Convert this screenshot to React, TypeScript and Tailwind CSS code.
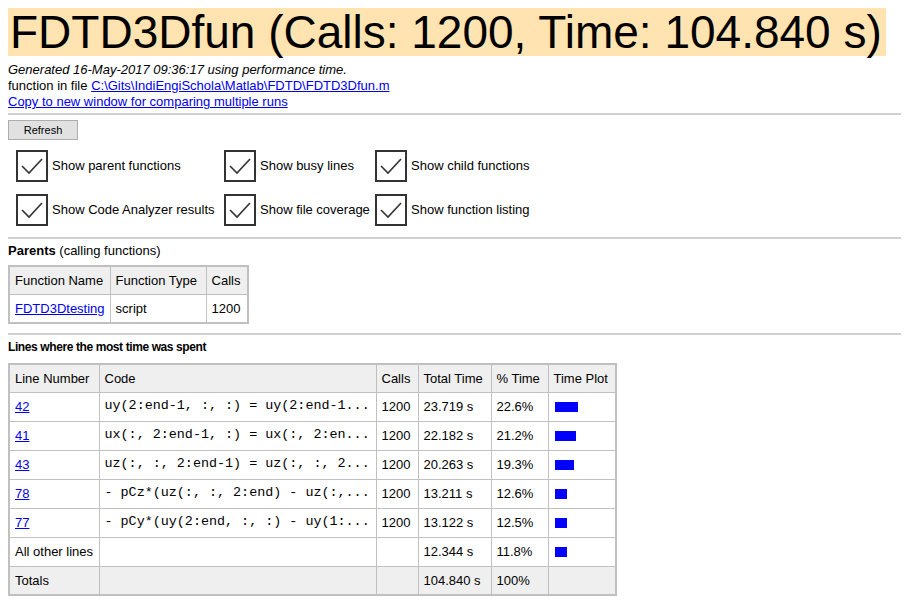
import React from "react";

const Check = () => (
  <div className="w-8 h-8 border-2 border-[#333] flex items-center justify-center shrink-0">
    <svg width="24" height="24" viewBox="0 0 24 24" fill="none">
      <path d="M2 12 L9 19 L22 5" stroke="#333" strokeWidth="1.6" />
    </svg>
  </div>
);

const Opt = ({ label, w }: { label: string; w: string }) => (
  <div className={`flex items-center gap-1 ${w}`}>
    <Check />
    <span>{label}</span>
  </div>
);

const rows = [
  { n: "42", code: "uy(2:end-1, :, :) = uy(2:end-1...", calls: "1200", t: "23.719 s", p: "22.6%", w: 23 },
  { n: "41", code: "ux(:, 2:end-1, :) = ux(:, 2:en...", calls: "1200", t: "22.182 s", p: "21.2%", w: 21 },
  { n: "43", code: "uz(:, :, 2:end-1) = uz(:, :, 2...", calls: "1200", t: "20.263 s", p: "19.3%", w: 19 },
  { n: "78", code: "- pCz*(uz(:, :, 2:end) - uz(:,...", calls: "1200", t: "13.211 s", p: "12.6%", w: 12 },
  { n: "77", code: "- pCy*(uy(2:end, :, :) - uy(1:...", calls: "1200", t: "13.122 s", p: "12.5%", w: 12 },
];

const td = "border border-[#c0c0c0] px-[5px] h-[29px] align-middle whitespace-nowrap";
const th = "border border-[#c0c0c0] px-[5px] h-[28px] align-middle font-normal text-left bg-[#efefef] whitespace-nowrap";

export default function App() {
  return (
    <div className="bg-white min-h-[605px] px-2 pt-2 text-[13px] text-black font-['Liberation_Sans',Arial,sans-serif]">
      <div className="whitespace-nowrap">
        <span className="inline-block bg-[#ffe4b2] text-[46px] leading-[48px] pl-[2px] pr-1">
          FDTD3Dfun (Calls: 1200, Time: 104.840 s)
        </span>
      </div>
      <div className="mt-[6px] leading-[16px]">
        <div className="italic">Generated 16-May-2017 09:36:17 using performance time.</div>
        <div>
          function in file{" "}
          <a className="text-[#0000ee] underline">C:\Gits\IndiEngiSchola\Matlab\FDTD\FDTD3Dfun.m</a>
        </div>
        <div>
          <a className="text-[#0000ee] underline">Copy to new window for comparing multiple runs</a>
        </div>
      </div>
      <hr className="mt-[3px] border-t-2 border-[#d0d0d0]" />
      <button className="mt-[5px] w-[70px] h-[20px] bg-[#e1e1e1] border border-[#adadad] text-[11px] font-['Liberation_Sans',Arial,sans-serif]">
        Refresh
      </button>
      <div className="ml-2 mt-[10px] flex flex-col gap-[12px]">
        <div className="flex">
          <Opt label="Show parent functions" w="w-[208px]" />
          <Opt label="Show busy lines" w="w-[151px]" />
          <Opt label="Show child functions" w="w-[200px]" />
        </div>
        <div className="flex">
          <Opt label="Show Code Analyzer results" w="w-[208px]" />
          <Opt label="Show file coverage" w="w-[151px]" />
          <Opt label="Show function listing" w="w-[200px]" />
        </div>
      </div>
      <hr className="mt-[11px] border-t-2 border-[#d0d0d0]" />
      <div className="mt-[5px] leading-[14px]">
        <b>Parents</b> (calling functions)
      </div>
      <table className="mt-[7px] border-collapse border-2 border-[#c0c0c0]">
        <thead>
          <tr>
            <th className={`${th} w-[98px]`}>Function Name</th>
            <th className={`${th} w-[96px]`}>Function Type</th>
            <th className={`${th} w-[42px]`}>Calls</th>
          </tr>
        </thead>
        <tbody>
          <tr>
            <td className={td}>
              <a className="text-[#0000ee] underline">FDTD3Dtesting</a>
            </td>
            <td className={td}>script</td>
            <td className={td}>1200</td>
          </tr>
        </tbody>
      </table>
      <hr className="mt-[9px] border-t-2 border-[#d0d0d0]" />
      <div className="mt-[5px] leading-[14px] font-bold text-[12px] tracking-[-0.4px]">
        Lines where the most time was spent
      </div>
      <table className="mt-[9px] border-collapse border-2 border-[#c0c0c0]">
        <thead>
          <tr>
            <th className={`${th} w-[90px]`}>Line Number</th>
            <th className={`${th} w-[277px]`}>Code</th>
            <th className={`${th} w-[42px]`}>Calls</th>
            <th className={`${th} w-[73px]`}>Total Time</th>
            <th className={`${th} w-[57px]`}>% Time</th>
            <th className={`${th} w-[68px]`}>Time Plot</th>
          </tr>
        </thead>
        <tbody>
          {rows.map((r) => (
            <tr key={r.n}>
              <td className={td}>
                <a className="text-[#0000ee] underline">{r.n}</a>
              </td>
              <td className={`${td} font-['Liberation_Mono','Courier_New',monospace] text-[13.4px] whitespace-pre`}>
                {r.code}
              </td>
              <td className={td}>{r.calls}</td>
              <td className={td}>{r.t}</td>
              <td className={td}>{r.p}</td>
              <td className={td}>
                <div className="h-[10px] bg-[#0000ff] ml-[1px]" style={{ width: r.w }} />
              </td>
            </tr>
          ))}
          <tr>
            <td className={td}>All other lines</td>
            <td className={td}></td>
            <td className={td}></td>
            <td className={td}>12.344 s</td>
            <td className={td}>11.8%</td>
            <td className={td}>
              <div className="h-[10px] w-[12px] bg-[#0000ff] ml-[1px]" />
            </td>
          </tr>
          <tr className="bg-[#efefef]">
            <td className={td}>Totals</td>
            <td className={td}></td>
            <td className={td}></td>
            <td className={td}>104.840 s</td>
            <td className={td}>100%</td>
            <td className={td}></td>
          </tr>
        </tbody>
      </table>
    </div>
  );
}
